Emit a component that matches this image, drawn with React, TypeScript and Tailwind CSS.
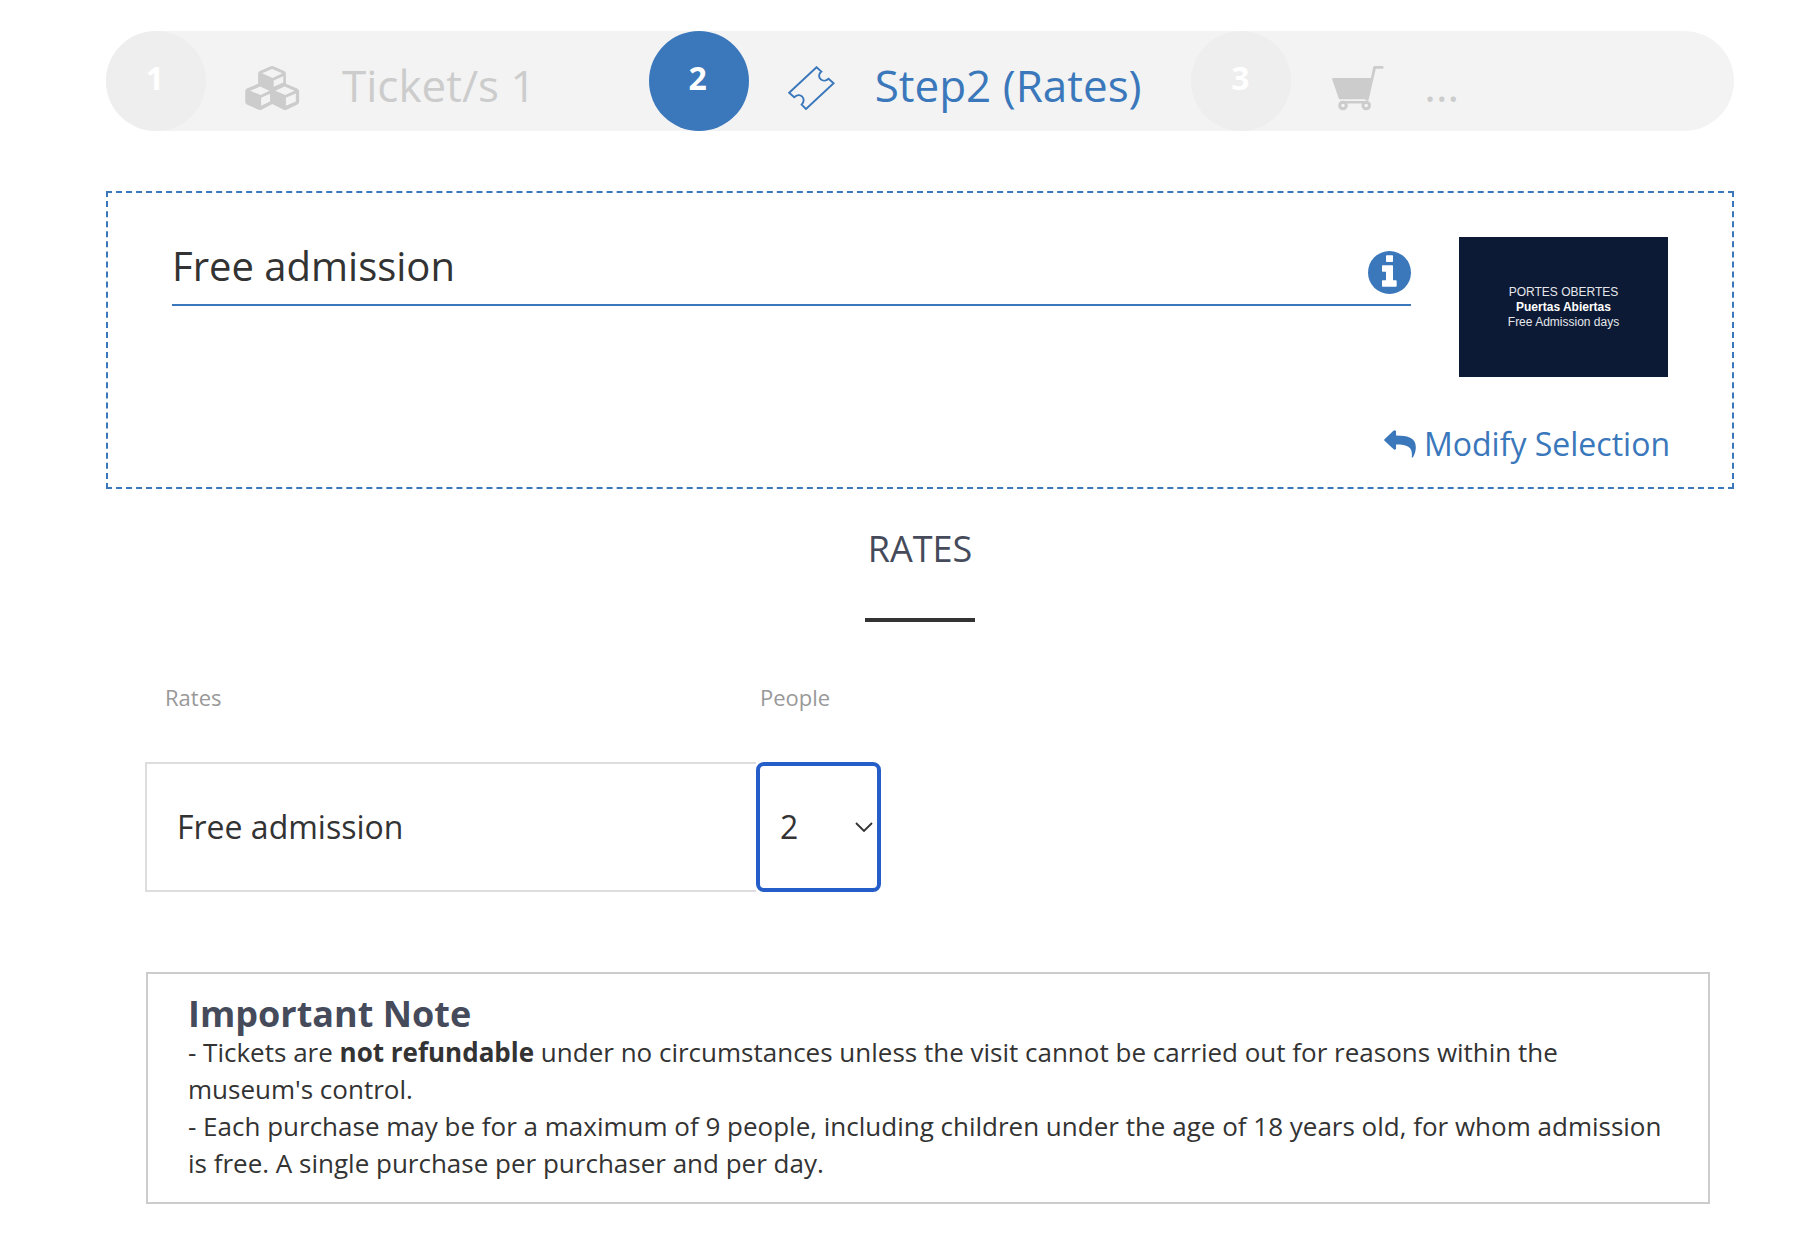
import { useState } from 'react';
import type { ReactNode } from 'react';
import clsx from 'clsx';

const CubesIcon = () => (
  <svg viewBox="465 138 171 133" className="h-11 w-[57px]" fill="currentColor" fillRule="evenodd" aria-hidden="true">
    <path d="M542 139Q546 137 550 139L583 153Q588 156 588 160V192L622 206Q628 209 628 214V246Q628 251 623 254L590 270Q585 272 581 270L547 253L514 270Q509 272 505 270L470 254Q465 251 465 246V214Q465 209 470 206L504 192V160Q504 156 509 153ZM546 147L516 160L548 174L577 160ZM551 182V201L580 188V169ZM510 200L480 213L512 226L538 213ZM513 234V258L540 245V222ZM584 200L556 213L586 226L614 213ZM588 234V258L618 245V221Z" />
  </svg>
);

const TicketIcon = () => (
  <svg viewBox="0 0 47 44" className="h-11 w-[47px]" fill="none" stroke="currentColor" strokeWidth="1.9" aria-hidden="true">
    <path d="M28.5 1.2L33.4 5.6C30.4 8 30.6 11.2 32.6 13.2C34.6 15.2 38 15.2 40.6 12.8L45.6 17.2L18 43L13.6 38.6C16.2 36 16.2 32.6 14.2 30.6C12.2 28.6 8.8 28.8 6.2 31.2L1.2 26.8Z" />
  </svg>
);

const CartIcon = () => (
  <svg viewBox="-2 0 54 46" className="h-[46px] w-[54px]" fill="currentColor" aria-hidden="true">
    <path d="M1 13H38.8L41.2 2.3Q41.5 1 43 1H50.5Q51.6 1 51.6 2.3T50.5 3.7H43.8L36.4 35.4H33.4L33.6 34.2H8Q7 34.2 6.7 33.2L.2 14.6Q-.2 13 1 13Z" />
    <path d="M8 36H36V38.5H8Z" />
    <g fill="none" stroke="currentColor" strokeWidth="3">
      <circle cx="11" cy="40.5" r="3.3" />
      <circle cx="34.2" cy="40.5" r="3.3" />
    </g>
  </svg>
);

const InfoIcon = () => (
  <svg viewBox="0 0 129 129" className="size-[43px]" aria-hidden="true">
    <circle cx="64.5" cy="64.5" r="64.5" fill="currentColor" />
    <rect x="54" y="13" width="21" height="20" rx="2" fill="#fff" />
    <path d="M44 43H73Q75 43 75 45V88H84Q86 88 86 90V105Q86 107 84 107H44Q42 107 42 105V90Q42 88 44 88H54V62H44Q42 62 42 60V45Q42 43 44 43Z" fill="#fff" />
  </svg>
);

const ReplyIcon = () => (
  <svg viewBox="132 749 96 85" className="h-7 w-8" fill="currentColor" aria-hidden="true">
    <path d="M133 777L160 751Q165 747 168 753V766C206 766 228 774 228 801C228 815 222 828 219 832Q215 835 216 829C218 801 205 793 168 793V806Q165 811 160 807L133 782Q131 779 133 777Z" />
  </svg>
);

type Step = {
  label: string;
  icon: ReactNode;
  active?: boolean;
};

const steps: Step[] = [
  { label: 'Ticket/s 1', icon: <CubesIcon /> },
  { label: 'Step2 (Rates)', icon: <TicketIcon />, active: true },
  { label: '...', icon: <CartIcon /> },
];

const StepBar = () => (
  <ol className="grid grid-cols-3 rounded-full bg-[#f3f3f3]">
    {steps.map((step, index) => (
      <li
        key={step.label}
        className={clsx('flex items-center', step.active ? 'text-[#3a77bb]' : 'text-[#ccc]')}
        aria-current={step.active ? 'step' : undefined}
      >
        <span
          className={clsx(
            'flex size-[100px] shrink-0 items-center justify-center rounded-full pr-0.5 pb-1.5 text-[32px] font-bold text-white',
            step.active ? 'bg-[#3a77bb]' : 'bg-[#eee]'
          )}
        >
          {index + 1}
        </span>
        <span className="ml-[39px] shrink-0 pt-3.5">{step.icon}</span>
        <span className="ml-10 pt-2 text-[44px] leading-[60px] whitespace-nowrap">{step.label}</span>
      </li>
    ))}
  </ol>
);

const SelectionCard = () => (
  <section className="mt-[60px] border-2 border-dashed border-[#3a77bb] px-16 pt-11 pb-[19px]">
    <div className="flex items-start gap-12">
      <div className="flex flex-1 items-end justify-between border-b-2 border-[#3a77bb] pb-2.5">
        <h2 className="text-[40px] leading-[57px]">Free admission</h2>
        <button type="button" aria-label="Information" className="text-[#3a77bb]">
          <InfoIcon />
        </button>
      </div>
      <div className="flex h-[140px] w-[209px] shrink-0 flex-col items-center justify-center bg-[#0d1a35] font-['Liberation_Sans',sans-serif] text-[12px] leading-[15px] text-gray-200">
        <span>PORTES OBERTES</span>
        <strong className="font-bold text-white">Puertas Abiertas</strong>
        <span>Free Admission days</span>
      </div>
    </div>
    <div className="-mr-0.5 mt-[43px] flex justify-end">
      <a href="#" className="flex items-center gap-2 text-[32px] leading-[48px] text-[#3a77bb]">
        <ReplyIcon />
        Modify Selection
      </a>
    </div>
  </section>
);

const RatesTable = () => {
  const [people, setPeople] = useState('2');

  return (
    <table className="mt-[59px] ml-[39px] w-[736px] table-fixed border-separate border-spacing-0">
      <thead>
        <tr className="text-left text-[22px] leading-8 text-[#999]">
          <th className="p-0 pb-[49px] pl-5 font-normal">Rates</th>
          <th className="w-[125px] p-0 pb-[49px] pl-1 font-normal">
            <label htmlFor="people">People</label>
          </th>
        </tr>
      </thead>
      <tbody>
        <tr className="text-[32px]">
          <td className="border-2 border-r-0 border-[#ddd] p-0 pl-[30px]">Free admission</td>
          <td className="p-0">
            <div className="relative">
              <select
                id="people"
                value={people}
                onChange={(e) => setPeople(e.target.value)}
                className="block h-[130px] w-full appearance-none rounded-lg border-4 border-[#255dc9] bg-white pl-5 outline-none"
              >
                {['0', '1', '2', '3', '4', '5', '6', '7', '8', '9'].map((n) => (
                  <option key={n}>{n}</option>
                ))}
              </select>
              <svg
                viewBox="0 0 18 10"
                className="pointer-events-none absolute top-[60px] right-2 h-2.5 w-[18px]"
                fill="none"
                stroke="currentColor"
                strokeWidth="1.8"
                aria-hidden="true"
              >
                <path d="M1 1L9 9L17 1" />
              </svg>
            </div>
          </td>
        </tr>
      </tbody>
    </table>
  );
};

const ImportantNote = () => (
  <section className="mt-20 mr-6 ml-10 border-2 border-[#ccc] px-10 py-5 text-[26px] leading-[37px]">
    <h3 className="text-[36px] leading-10 font-bold text-[#454b5a]">Important Note</h3>
    <p>
      - Tickets are <strong className="font-bold">not refundable</strong> under no circumstances unless the visit
      cannot be carried out for reasons within the museum's control.
    </p>
    <p>
      - Each purchase may be for a maximum of 9 people, including children under the age of 18 years old, for whom
      admission is free. A single purchase per purchaser and per day.
    </p>
  </section>
);

const App = () => {
  return (
    <main className="min-h-screen bg-white pt-[31px] pr-[66px] pb-12 pl-[106px] font-['Open_Sans',sans-serif] text-[#333]">
      <StepBar />
      <SelectionCard />
      <h1 className="mt-9 text-center text-[36px] leading-[48px] text-[#454b5a]">RATES</h1>
      <div className="mx-auto mt-[45px] h-1 w-[110px] bg-[#333]" />
      <RatesTable />
      <ImportantNote />
    </main>
  );
};

export default App;
